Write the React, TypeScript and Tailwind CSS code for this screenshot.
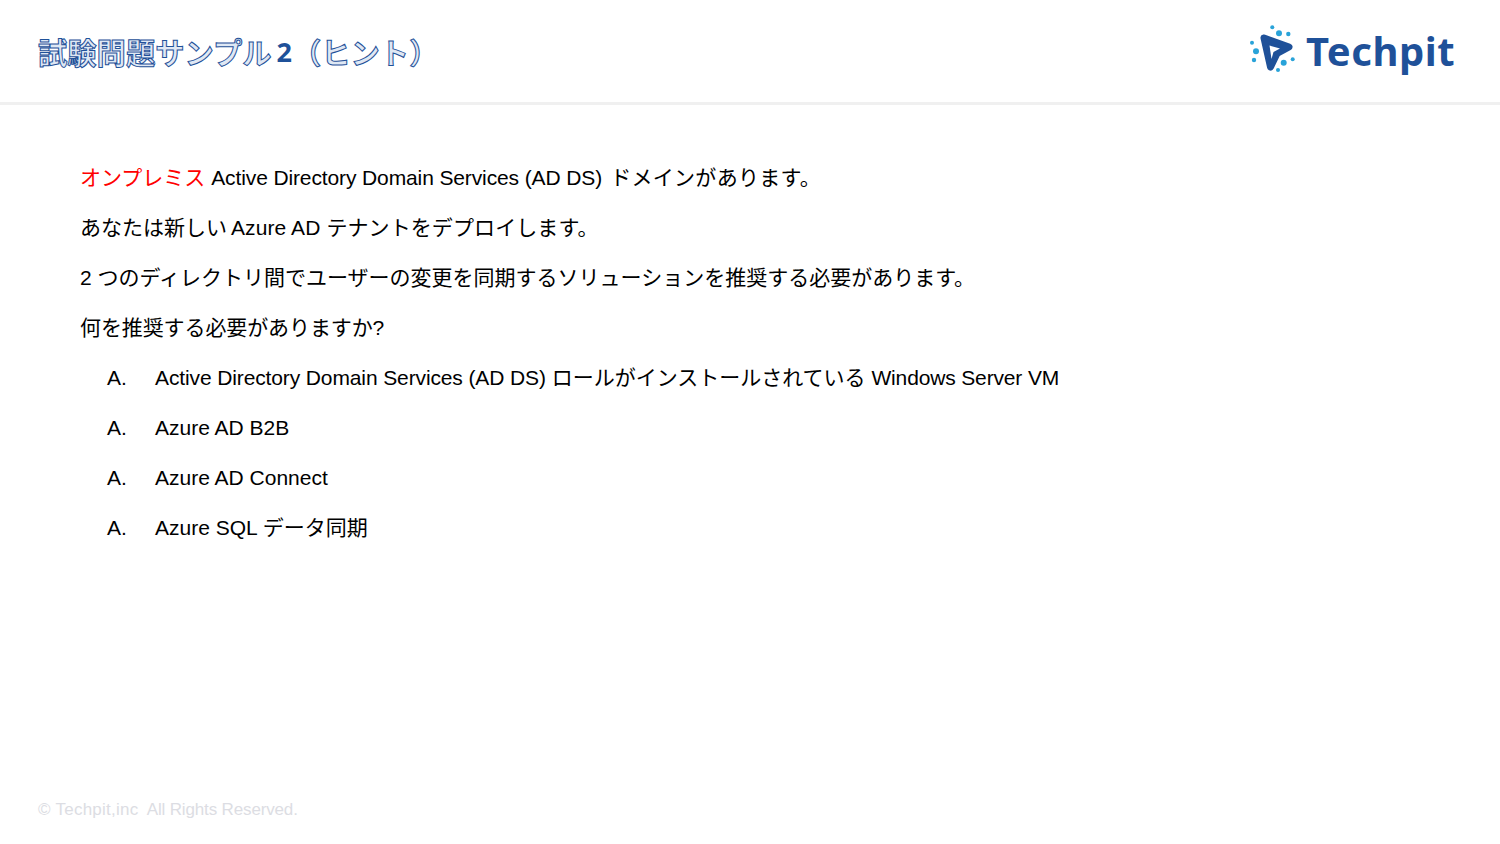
const sans = "font-['Liberation_Sans','Noto_Sans_CJK_JP',sans-serif]";
const ad = 'Active Directory Domain Services (AD DS)';

const options = [
  <>
    <span className="tracking-[-0.12px]">{ad}</span> ロールがインストールされている <span className="tracking-[-0.15px]">Windows Server VM</span>
  </>,
  'Azure AD B2B',
  'Azure AD Connect',
  'Azure SQL データ同期',
];

function Logo() {
  return (
    <div className="flex items-center gap-[10px]">
      <svg width="46" height="50" viewBox="0 0 46 50" className="shrink-0 overflow-visible">
        <path
          d="M14 12 L39 21 L27 27.500 L20.500 41 Z"
          fill="#1f5199"
          stroke="#1f5199"
          strokeWidth="7"
          strokeLinejoin="round"
        />
        <path d="M19.500 19.500 L30 22.500 L23.500 26 L21.500 33 Z" fill="#ffffff" />
        <g fill="#29a3d9">
          <circle cx="22.300" cy="1.300" r="2" />
          <circle cx="29" cy="7.300" r="3" />
          <circle cx="38.300" cy="8" r="2.200" />
          <circle cx="2" cy="16.700" r="2" />
          <circle cx="6" cy="25.300" r="3" />
          <circle cx="4" cy="34" r="2.200" />
          <circle cx="33.700" cy="36.700" r="3" />
          <circle cx="42.700" cy="33.300" r="2" />
          <circle cx="28" cy="44" r="2" />
        </g>
      </svg>
      <span className="font-['Noto_Sans',sans-serif] text-[40px] leading-none font-bold tracking-[0.5px] text-[#1f5199]">
        Techpit
      </span>
    </div>
  );
}

export default function App() {
  return (
    <div className={`w-[1500px] h-[844px] bg-white flex flex-col overflow-hidden ${sans}`}>
      <header className="h-[105px] shrink-0 border-b-[3px] border-[#f0f0f0] pl-[38px] pr-[45px] flex items-center justify-between">
        <h1 className="flex items-center pt-[2px] text-[29.3px] leading-none font-bold text-[#1f5199] font-['Noto_Sans_CJK_JP',sans-serif]">
          <span className="text-[#dfe8f4] [-webkit-text-stroke:1px_#1f5199]">試験問題サンプル</span>
          <span className="ml-[5px] text-[27px] font-['Open_Sans',sans-serif]">2</span>
          <span className="text-[#dfe8f4] [-webkit-text-stroke:1px_#1f5199]">（ヒント）</span>
        </h1>
        <Logo />
      </header>

      <main className="flex-1 pl-[80px] pt-[48px] text-[21px] leading-[50px] text-black">
        <p>
          <span className="text-[#ff0000]">オンプレミス</span> <span className="tracking-[-0.12px]">{ad}</span>
          <span className="ml-[2px] tracking-[0.3px]"> ドメインがあります。</span>
        </p>
        <p>
          あなたは新しい<span className="ml-[-2px] tracking-[0.1px]"> Azure AD テナントをデプロイします。</span>
        </p>
        <p>2 つのディレクトリ間でユーザーの変更を同期するソリューションを推奨する必要があります。</p>
        <p className="tracking-[-0.1px]">何を推奨する必要がありますか?</p>
        <ul>
          {options.map((option, i) => (
            <li key={i} className="flex pl-[27px]">
              <span className="w-[48px] shrink-0">A.</span>
              <span>{option}</span>
            </li>
          ))}
        </ul>
      </main>

      <footer className="h-[46px] shrink-0 pl-[38px] text-[17px] leading-[24px] text-[#dcdde3] whitespace-pre">
        <span className="tracking-[0.25px]">© Techpit,inc</span>
        <span className="tracking-[-0.15px]">  All Rights Reserved.</span>
      </footer>
    </div>
  );
}
